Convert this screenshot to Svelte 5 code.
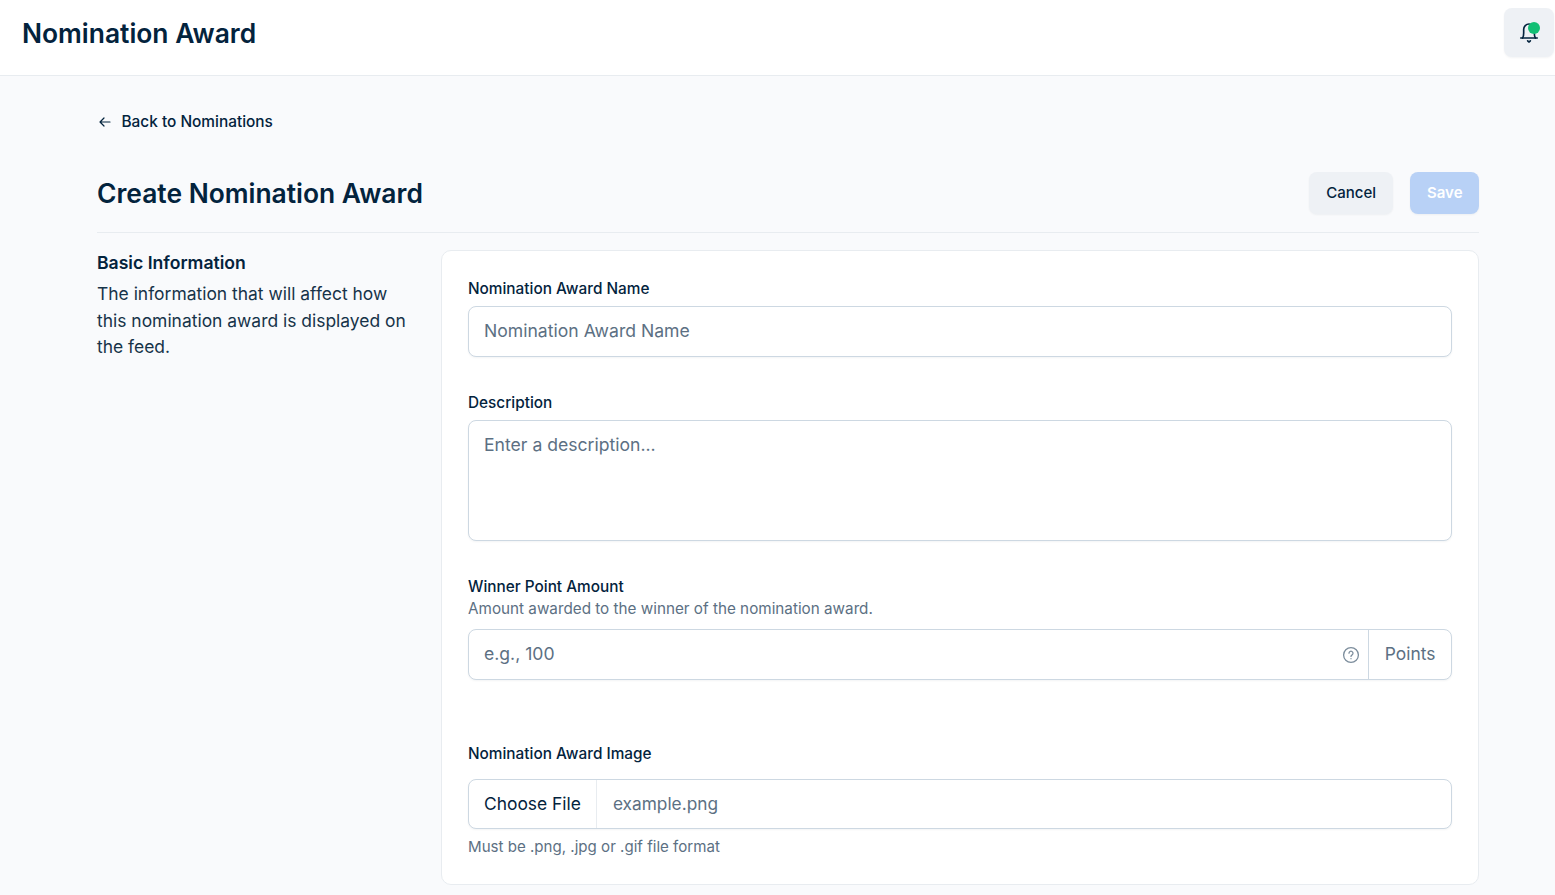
<script>
    let name = $state('');
    let description = $state('');
    let points = $state('');
</script>

<header class="topbar">
    <h1>Nomination Award</h1>
    <button class="bell" aria-label="Notifications">
        <svg width="22" height="22" viewBox="0 0 24 24" fill="none" stroke="#03233d" stroke-width="1.8" stroke-linecap="round" stroke-linejoin="round">
            <path d="M5 17.5c1-1.5 1.2-3 1.2-5.5V8a5.8 5.8 0 0 1 11.6 0v4c0 2.5.3 4 1.2 5.5" />
            <path d="M3 17.5h18" />
            <path d="M10.5 20.6l1.5 1.2 1.5-1.2" />
        </svg>
        <span class="dot"></span>
    </button>
</header>

<main>
    <a class="back" href="/">
        <svg width="14" height="14" viewBox="0 0 14 14" fill="none" stroke="#03233d" stroke-width="1.2" stroke-linecap="round" stroke-linejoin="round">
            <path d="M12 7H2M6 3 2 7l4 4" />
        </svg>
        Back to Nominations
    </a>

    <div class="title-row">
        <h2>Create Nomination Award</h2>
        <div class="actions">
            <button class="btn cancel">Cancel</button>
            <button class="btn save" disabled>Save</button>
        </div>
    </div>

    <div class="columns">
        <aside>
            <h3>Basic Information</h3>
            <p>The information that will affect how this nomination award is displayed on the feed.</p>
        </aside>

        <form class="card">
            <div class="field first">
                <label for="award-name">Nomination Award Name</label>
                <input id="award-name" class="control" placeholder="Nomination Award Name" bind:value={name} />
            </div>

            <div class="field desc">
                <label for="award-desc">Description</label>
                <textarea id="award-desc" class="control" placeholder="Enter a description..." bind:value={description}></textarea>
            </div>

            <div class="field points">
                <label for="award-points">Winner Point Amount</label>
                <span class="hint">Amount awarded to the winner of the nomination award.</span>
                <div class="group">
                    <input id="award-points" placeholder="e.g., 100" bind:value={points} />
                    <svg class="help" width="18" height="18" viewBox="0 0 18 18" fill="none" stroke="#7c8d9c" stroke-width="1.3" stroke-linecap="round">
                        <circle cx="9" cy="9" r="7.4" />
                        <path d="M7 7.2a2 2 0 1 1 3.1 1.7c-.7.4-1.1.8-1.1 1.5" />
                        <path d="M9 12.6v.1" />
                    </svg>
                    <span class="addon">Points</span>
                </div>
            </div>

            <div class="field image">
                <span class="label">Nomination Award Image</span>
                <div class="group file">
                    <span class="choose">Choose File</span>
                    <span class="filename">example.png</span>
                </div>
                <span class="hint under">Must be .png, .jpg or .gif file format</span>
            </div>
        </form>
    </div>
</main>

<style>
    :global(body) { margin: 0; background: #f9fafc; font-family: Inter, "Liberation Sans", sans-serif; color: #03233d; }
    .topbar { height: 75px; background: #fff; border-bottom: 1px solid #e8ecf0; display: flex; align-items: center; justify-content: space-between; padding-left: 22px; }
    h1 { margin: -10px 0 0; font-size: 26.4px; font-weight: 600; }
    .bell { position: relative; width: 50px; height: 49px; margin: -10px 1px 0 0; border: none; border-radius: 8px; background: #eef1f5; display: flex; align-items: center; justify-content: center; padding: 0; box-shadow: 0 1px 2px rgba(3, 35, 61, 0.05); }
    .dot { position: absolute; top: 13.5px; left: 24px; width: 12px; height: 12px; border-radius: 50%; background: #12bf74; }

    main { padding: 37px 76px 0 97px; }
    .back { display: flex; align-items: center; gap: 9.5px; color: #03233d; text-decoration: none; font-size: 15.4px; font-weight: 500; line-height: 18px; }
    .back svg { margin-left: 1px; }
    .title-row { display: flex; align-items: center; justify-content: space-between; margin-top: 41px; padding-bottom: 18px; border-bottom: 1px solid #e8ecf0; }
    h2 { margin: 0; font-size: 26.4px; font-weight: 600; }
    .actions { display: flex; gap: 17px; }
    .btn { height: 42px; border: none; border-radius: 8px; font: 500 15px Inter, sans-serif; box-shadow: 0 1px 2px rgba(3, 35, 61, 0.05); }
    .cancel { background: #eef1f5; color: #03233d; padding: 0 17.5px 2px; }
    .save { background: #b8d1f6; color: #fff; font-weight: 600; padding: 0 16.5px 2px; }

    .columns { display: flex; margin-top: 17px; }
    aside { width: 344px; flex: none; padding-right: 30px; box-sizing: border-box; }
    h3 { margin: 1px 0 0; font-size: 17.6px; font-weight: 600; line-height: 24px; }
    aside p { margin: 6px 0 0; font-size: 17.45px; line-height: 26.5px; color: #163349; }

    .card { flex: 1; background: #fff; border: 1px solid #e8ecf0; border-radius: 10px; padding: 28px 26px 25px; height: 635px; box-sizing: border-box; }
    .field { display: flex; flex-direction: column; }
    label, .label { font-size: 15.35px; font-weight: 500; line-height: 20px; }
    .hint { font-size: 15.25px; line-height: 20px; color: #5c7083; margin-top: 2px; }
    .control, .group { margin-top: 7px; box-sizing: border-box; border: 1px solid #cdd8e2; border-radius: 8px; background: #fff; box-shadow: 0 1px 2px rgba(3, 35, 61, 0.05); }
    .control { width: 100%; height: 51px; padding: 0 15px 2px; font: 17.6px Inter, sans-serif; color: #03233d; outline: none; }
    textarea.control { height: 121px; padding: 12px 15px; resize: none; line-height: 24px; display: block; }
    ::placeholder { color: #5c7083; opacity: 1; }

    .desc { margin-top: 36px; }
    .points { margin-top: 36px; }
    .image { margin-top: 64px; }

    .group { display: flex; align-items: center; height: 51px; overflow: hidden; }
    .points .group { margin-top: 10px; }
    .group input { flex: 1; min-width: 0; height: 100%; box-sizing: border-box; border: none; outline: none; padding: 0 15px 2px; font: 17.6px Inter, sans-serif; background: transparent; }
    .help { margin-right: 8px; flex: none; }
    .addon { align-self: stretch; display: flex; align-items: center; padding: 0 15.5px 2px; border-left: 1px solid #cdd8e2; font-size: 17.4px; color: #5c7083; }

    .image .group { margin-top: 15px; height: 50px; }
    .choose { align-self: stretch; display: flex; align-items: center; padding: 0 15px 2px; border-right: 1px solid #e8ecf0; font-size: 17.4px; }
    .filename { padding: 0 0 2px 16px; font-size: 17.3px; color: #5c7083; }
    .under { margin-top: 8px; font-size: 15.1px; }
</style>
